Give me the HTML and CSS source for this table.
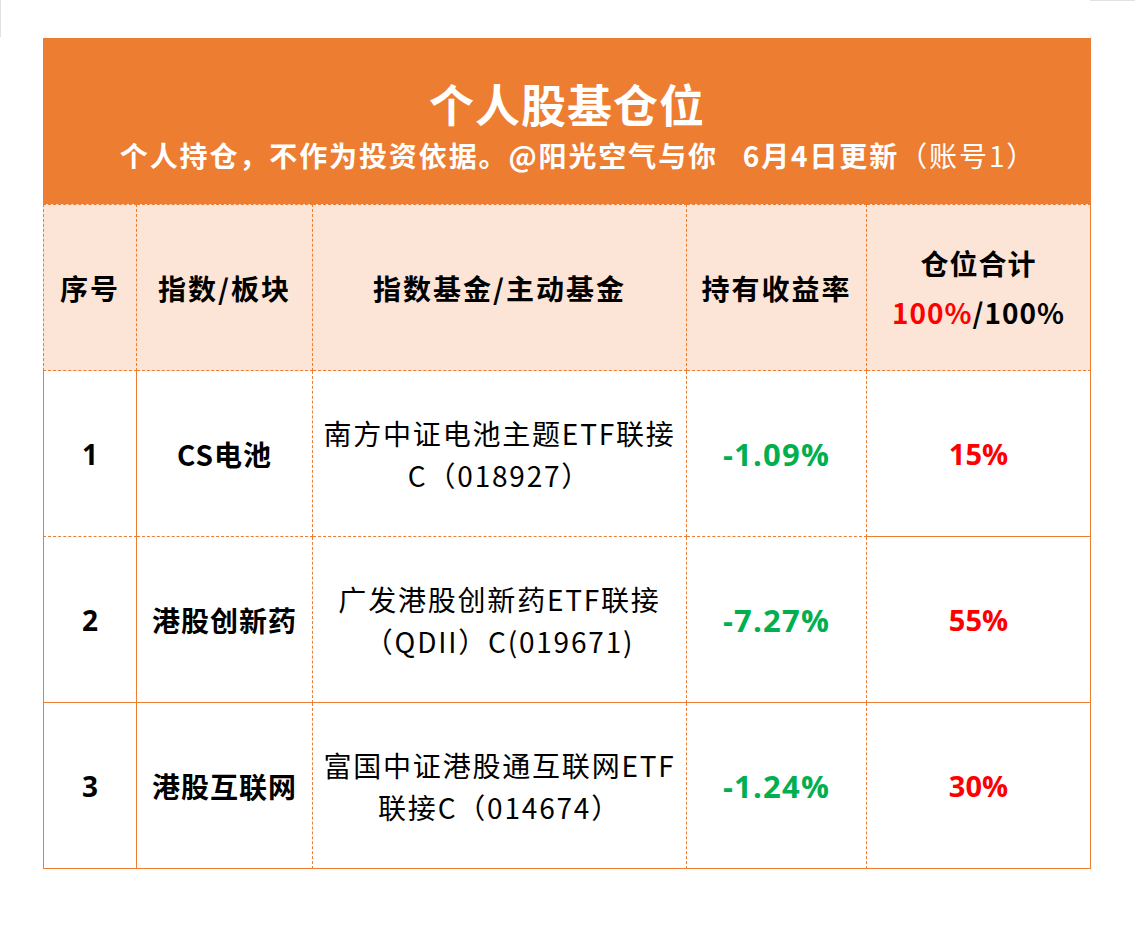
FILE: index.html
```html
<!DOCTYPE html>
<html lang="zh-CN">
<head>
<meta charset="utf-8">
<title>个人股基仓位</title>
<link rel="stylesheet" href="styles.css">
</head>
<body>
<div class="corner-left"></div>
<div class="corner-right"></div>
<main class="page">
  <section class="sheet">
    <header class="banner">
      <h1 class="title">个人股基仓位</h1>
      <p class="subtitle">个人持仓，不作为投资依据。@阳光空气与你&nbsp;&nbsp;&nbsp;6月4日更新<span class="light">（账号1）</span></p>
    </header>
    <div class="grid">
      <div class="cell head first">序号</div>
      <div class="cell head">指数/板块</div>
      <div class="cell head">指数基金/主动基金</div>
      <div class="cell head">持有收益率</div>
      <div class="cell head last"><div class="total">仓位合计</div><div class="total"><span class="red">100%</span>/100%</div></div>

      <div class="cell first idx row1">1</div>
      <div class="cell sector row1">CS电池</div>
      <div class="cell fund row1">南方中证电池主题ETF联接<br>C（018927）</div>
      <div class="cell ret row1">-1.09%</div>
      <div class="cell pos last row1">15%</div>

      <div class="cell first idx rowx">2</div>
      <div class="cell sector rowx">港股创新药</div>
      <div class="cell fund rowx">广发港股创新药ETF联接<br>（QDII）C(019671)</div>
      <div class="cell ret rowx">-7.27%</div>
      <div class="cell pos last rowx">55%</div>

      <div class="cell first idx rowx">3</div>
      <div class="cell sector rowx">港股互联网</div>
      <div class="cell fund rowx">富国中证港股通互联网ETF<br>联接C（014674）</div>
      <div class="cell ret rowx">-1.24%</div>
      <div class="cell pos last rowx">30%</div>
    </div>
  </section>
</main>
</body>
</html>
```
FILE: styles.css
```css
* { box-sizing: border-box; }
html, body { margin: 0; padding: 0; background: #ffffff; }
body {
  font-family: "Open Sans", "Noto Sans CJK SC", sans-serif;
  color: #000;
  position: relative;
  width: 1135px;
  height: 929px;
  overflow: hidden;
}
.corner-left {
  position: absolute; left: 0; top: 0; width: 1px; height: 37px; background: #e2e2e2;
}
.corner-right {
  position: absolute; left: 1090px; top: 0; width: 45px; height: 1px; background: #e2e2e2;
}
.page { padding: 38px 0 0 43px; }
.sheet { width: 1048px; }
.banner {
  height: 166px;
  background: #ed7d31;
  color: #fff;
  display: flex;
  flex-direction: column;
  align-items: center;
  padding-top: 38px;
}
.title {
  margin: 0;
  font-family: "Noto Sans CJK SC", sans-serif;
  font-size: 45px;
  font-weight: 700;
  line-height: 56px;
  letter-spacing: 1px;
}
.subtitle {
  margin: 3px 0 0 22px;
  font-family: "Noto Sans CJK SC", sans-serif;
  font-size: 28px;
  font-weight: 700;
  line-height: 40px;
  letter-spacing: 1.9px;
  white-space: nowrap;
}
.subtitle .light { font-weight: 400; }

.grid {
  display: grid;
  grid-template-columns: 94px 176px 374px 180px 224px;
  grid-template-rows: 167px 166px 166px 166px;
}
.cell {
  display: flex;
  flex-direction: column;
  align-items: center;
  justify-content: center;
  text-align: center;
  border-right: 1px dashed #ed7d31;
  border-bottom: 1px dashed #ed7d31;
  font-size: 28px;
  line-height: 42px;
}
.cell.first { border-left: 1px solid #ed7d31; }
.cell.last { border-right: 1px solid #ed7d31; }

.head {
  background: #fce4d6;
  border-top: 1px dashed #ed7d31;
  font-family: "Noto Sans CJK SC", sans-serif;
  font-weight: 700;
  letter-spacing: 2px;
}
.head.first { border-left-style: dashed; }
.total { line-height: 49px; letter-spacing: 1px; }
.red { color: #ff0000; }

.idx { border-right-style: solid; font-weight: 700; }
.row1.last { border-bottom-style: solid; }
.rowx { border-bottom-style: solid; }

.sector { font-family: "Noto Sans CJK SC", sans-serif; font-weight: 700; letter-spacing: 1px; }
.fund { font-family: "Noto Sans CJK SC", sans-serif; font-weight: 400; letter-spacing: 1.8px; }
.ret { color: #00b050; font-weight: 700; font-size: 31px; letter-spacing: 1.2px; }
.pos { color: #ff0000; font-weight: 700; font-size: 29px; }
```
